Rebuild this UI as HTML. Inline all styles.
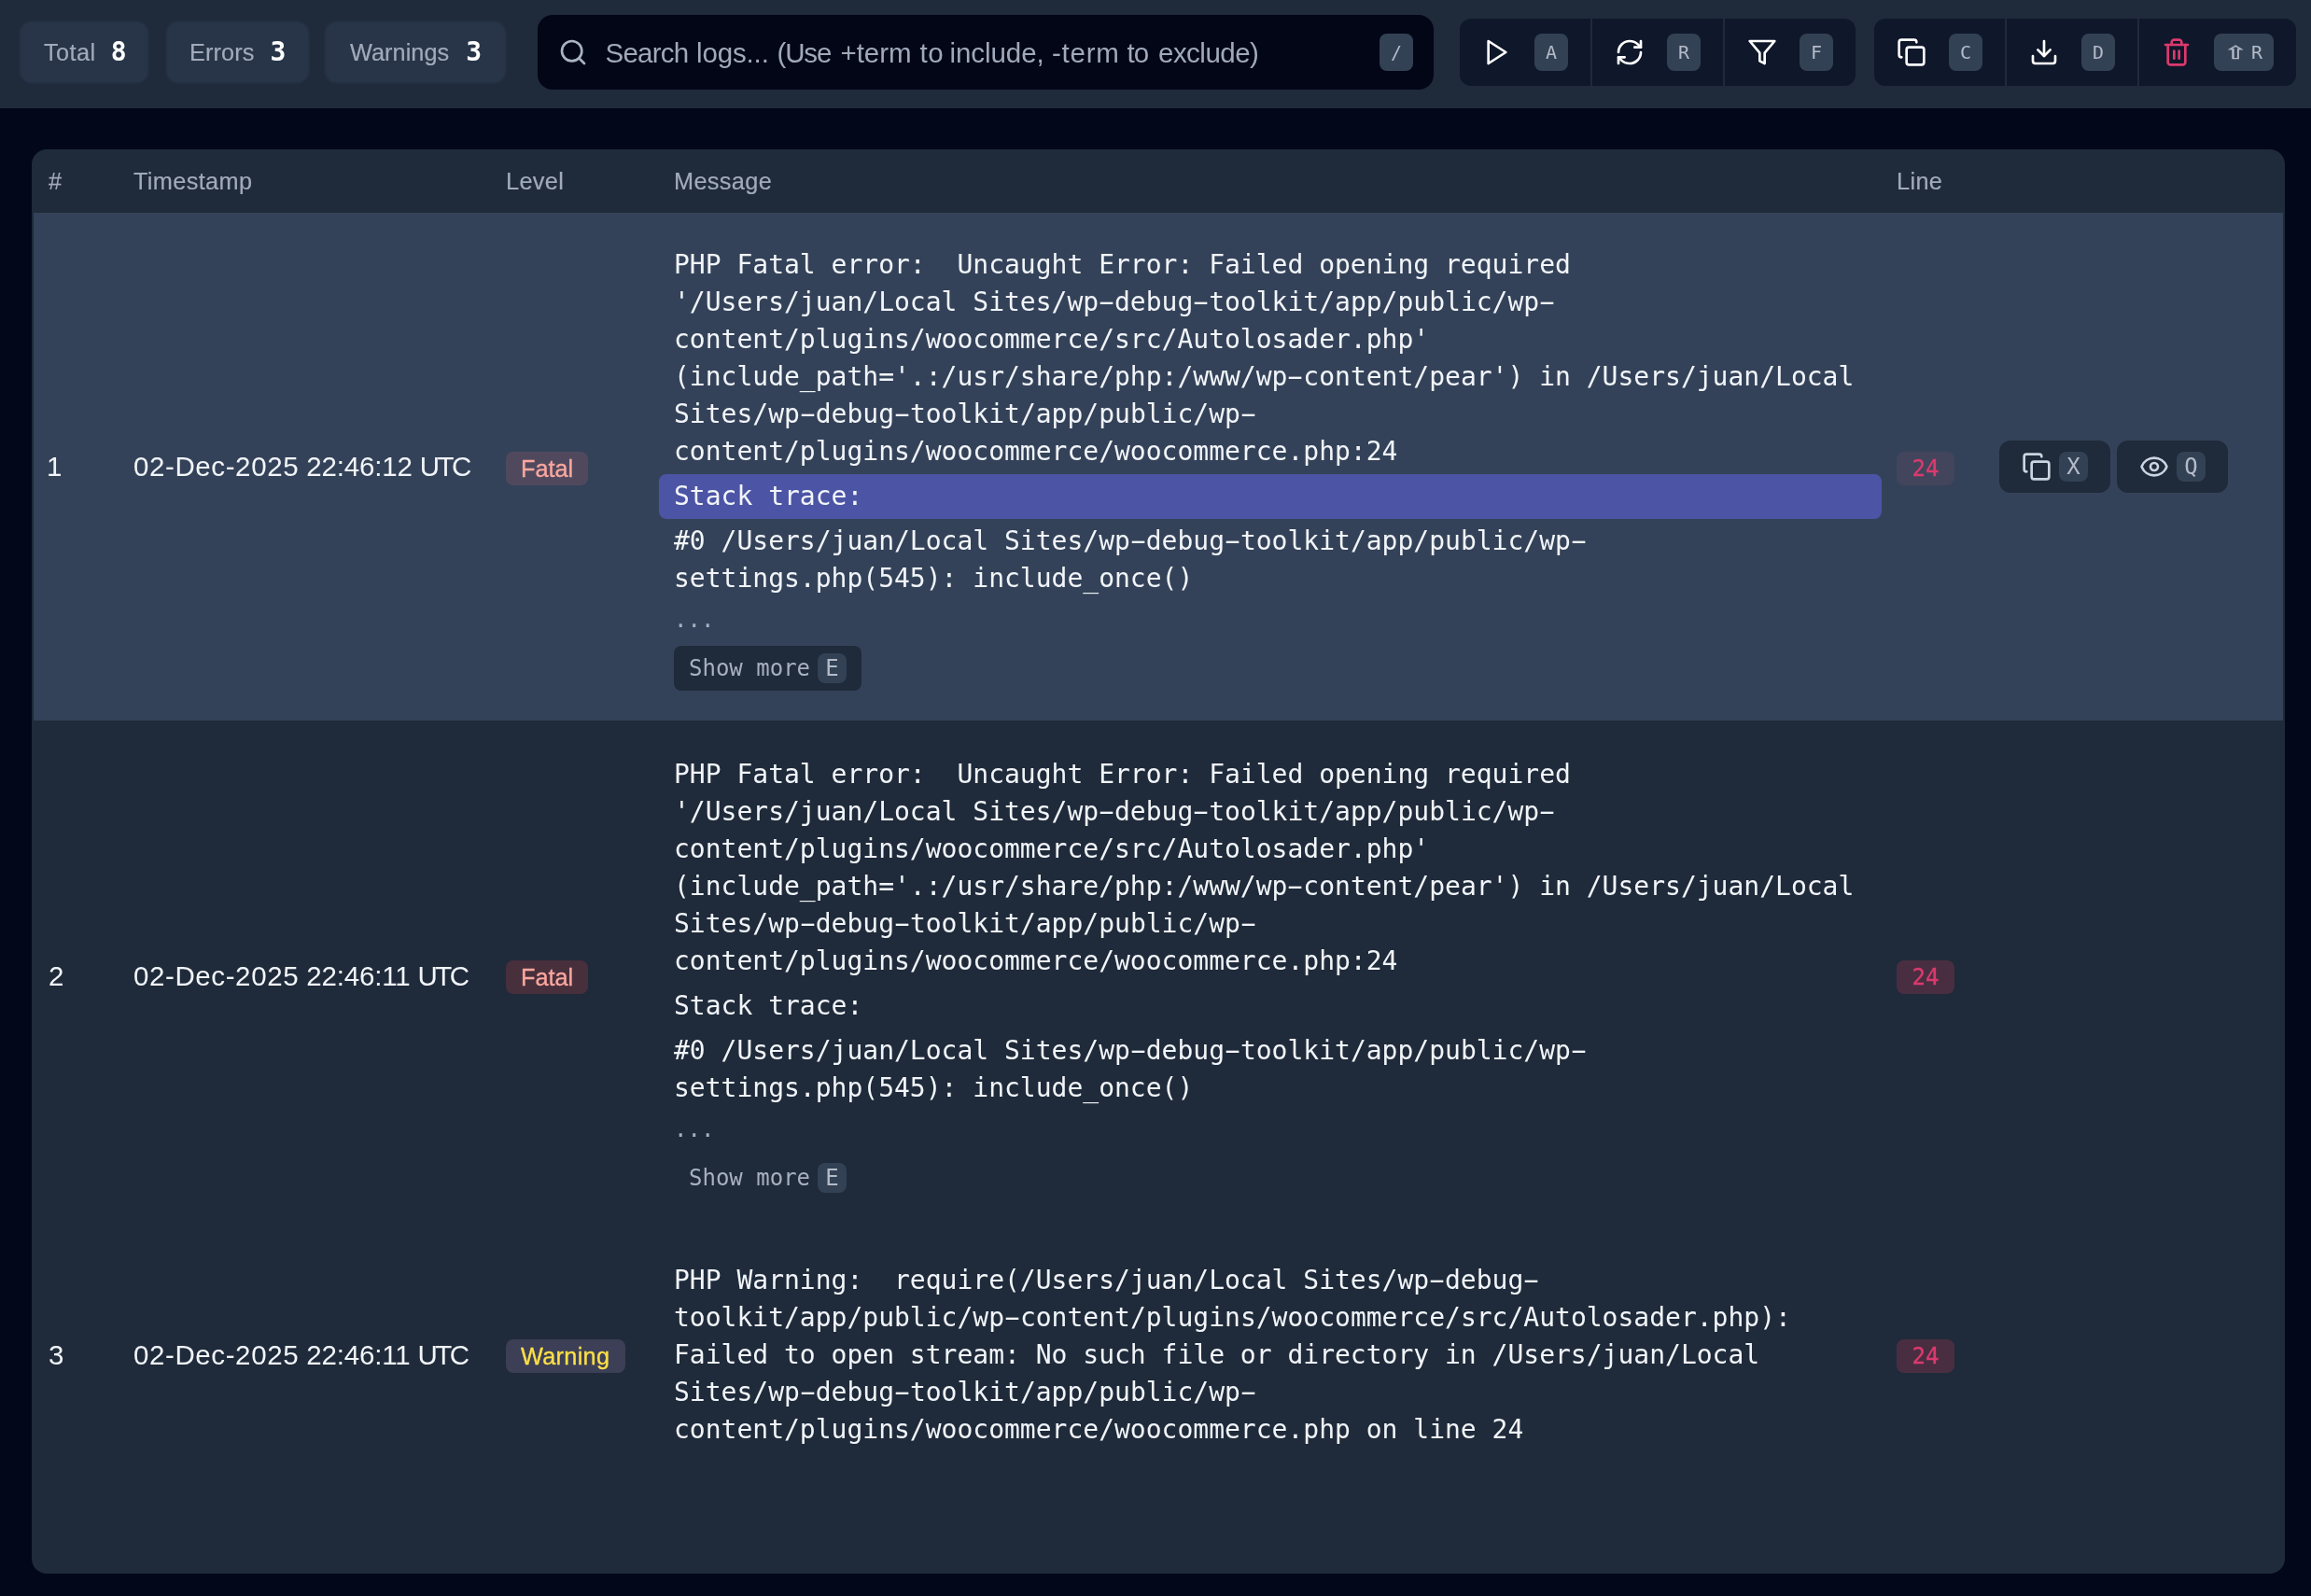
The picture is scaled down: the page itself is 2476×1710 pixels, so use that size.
<!DOCTYPE html>
<html lang="en">
<head>
<meta charset="utf-8">
<title>Log Viewer</title>
<style>
*{box-sizing:border-box;margin:0;padding:0}
html,body{width:2476px;height:1710px;overflow:hidden;background:#020819}
body{font-family:"Liberation Sans",sans-serif;color:#f1f5f9;position:relative}
.mono{font-family:"DejaVu Sans Mono","Liberation Mono",monospace}
svg.ic{width:32px;height:32px;fill:none;stroke:currentColor;stroke-width:2;stroke-linecap:round;stroke-linejoin:round;display:block;flex:none}

/* toolbar */
#bar,#card{will-change:transform}
#bar{position:absolute;left:0;top:0;width:2476px;height:116px;background:#1f2a3a}
.pill{position:absolute;top:22px;height:68px;border:2px solid #233043;background:#283548;border-radius:14px;display:flex;align-items:center;padding:0 0 0 25px}
.pill .l{font-size:25.3px;color:#a2aaba;line-height:32px;letter-spacing:.3px;-webkit-text-stroke:.2px #a2aaba}
.pill .n{font-family:"DejaVu Sans Mono",monospace;font-weight:bold;font-size:28px;color:#fff;margin-left:16px;line-height:32px}
#search{position:absolute;left:576px;top:16px;width:960px;height:80px;background:#020617;border-radius:16px}
#search svg{position:absolute;left:22px;top:24px;color:#aab3c4}
#search .ph{position:absolute;left:72.5px;top:21px;font-size:29.5px;line-height:40px;color:#a0a9ba;white-space:nowrap}
kbd{font-family:"DejaVu Sans Mono",monospace;font-style:normal;background:#334155;color:#b4bbc8;border-radius:8px;display:block;text-align:center;flex:none;white-space:nowrap}
kbd.t{height:40px;width:36px;font-size:20px;line-height:40px}
#search kbd{position:absolute;left:902px;top:20px}
.grp{position:absolute;top:20px;height:72px;background:#0f172a;border-radius:12px;display:flex;overflow:hidden}
.grp .b{height:72px;padding:0 24px;display:flex;align-items:center;color:#fff}
.grp .b kbd{margin-left:24px}
.sh{display:inline-block;width:20px;margin-right:8px;text-align:center;font-family:"DejaVu Sans",sans-serif;font-size:19px;line-height:20px;vertical-align:baseline;-webkit-text-stroke:.3px #b4bbc8;transform:translate(1px,0) scaleX(1.7)}
.grp .d{width:2px;height:72px;background:#1f2a3a}

/* table card */
#card{position:absolute;left:34px;top:160px;width:2414px;height:1526px;background:#1f2a3a;border-radius:16px;overflow:hidden}
.th{position:absolute;top:18px;font-size:25.3px;letter-spacing:.35px;-webkit-text-stroke:.2px #a2aaba;line-height:32px;color:#a2aaba;white-space:nowrap}
.row{position:absolute;left:2px;width:2410px}
.row.sel{background:#344259}
.c{position:absolute;white-space:nowrap}
.num,.ts{font-size:29.5px;line-height:40px;color:#f1f5f9}
.badge{position:absolute;height:36px;border-radius:8px;font-size:25.3px;line-height:36px;padding:0 16px;white-space:nowrap}
.fatal{background:rgba(239,68,68,.2);color:#fba79f;-webkit-text-stroke:.3px #fba79f}
.warn{background:#3c3f56;color:#fde047;-webkit-text-stroke:.3px #fde047;letter-spacing:.3px;padding-right:17px}
.ln{background:rgba(244,63,94,.2);color:#db3a6e;font-family:"DejaVu Sans Mono",monospace;font-size:24px;padding:0 16.5px;-webkit-text-stroke:.35px #db3a6e}
.msg{position:absolute;left:686px;width:1278px;font-family:"DejaVu Sans Mono",monospace;font-size:28px;line-height:40px;color:#f1f5f9;white-space:pre-wrap}
.sel .fatal{background:#50495e}
.sel .ln{background:#42455b}
.hy{display:inline-block;transform:scaleX(1.9) translateY(-.5px)}
.seg{padding:4px 16px;margin:0 -16px;border-radius:8px}
.seg.hl{background:rgba(99,102,241,.5)}
.seg.dim{color:#a8b0c0;font-size:24px;line-height:32px;margin-bottom:8px}
.more{display:inline-flex;align-items:center;height:48px;padding:0 16px;border-radius:8px;font-size:24px;line-height:32px;color:#a8b0c0;white-space:nowrap;vertical-align:top}
.more.on{background:#1f2a3a}
.more kbd{margin-left:8px;height:32px;width:31px;font-size:24px;line-height:32px;border-radius:8px}
.act{position:absolute;height:56px;background:#1f2a3a;border-radius:12px;display:flex;align-items:center;padding:0 24px;color:#cbd5e1}
.act kbd{margin-left:8px;height:32px;width:31px;font-size:24px;line-height:32px}
</style>
</head>
<body>
<div id="bar">
  <div class="pill" style="left:20px;width:140px"><span class="l" style="letter-spacing:.45px">Total</span><span class="n">8</span></div>
  <div class="pill" style="left:177px;width:155px"><span class="l" style="letter-spacing:.1px;margin-left:-1px">Errors</span><span class="n" style="margin-left:17px">3</span></div>
  <div class="pill" style="left:347px;width:196px"><span class="l" style="letter-spacing:.05px;margin-left:1px">Warnings</span><span class="n" style="margin-left:18px">3</span></div>
  <div id="search">
    <svg class="ic" viewBox="0 0 24 24"><circle cx="11" cy="11" r="8"/><path d="m21 21-4.3-4.3"/></svg>
    <span class="ph"><span style="margin-left:0.0px;letter-spacing:-0.76px">Search</span> <span style="margin-left:0.38px;letter-spacing:-0.14px">logs...</span> <span style="margin-left:0.56px;letter-spacing:-1.12px">(Use</span> <span style="margin-left:2.0px;letter-spacing:-0.05px">+term</span> <span style="margin-left:0.81px;letter-spacing:0.6px">to</span> <span style="margin-left:-2.0px;letter-spacing:-0.06px">include,</span> <span style="margin-left:0.09px;letter-spacing:0.75px">-term</span> <span style="margin-left:-0.27px;letter-spacing:-1.0px">to</span> <span style="margin-left:2.69px;letter-spacing:-0.52px">exclude)</span></span>
    <kbd class="t">/</kbd>
  </div>
  <div class="grp" style="left:1564px;width:424px">
    <div class="b"><svg class="ic" viewBox="0 0 24 24"><polygon points="5 3 19 12 5 21 5 3"/></svg><kbd class="t">A</kbd></div>
    <div class="d"></div>
    <div class="b"><svg class="ic" viewBox="0 0 24 24"><path d="M3 12a9 9 0 0 1 9-9 9.75 9.75 0 0 1 6.74 2.74L21 8"/><path d="M21 3v5h-5"/><path d="M21 12a9 9 0 0 1-9 9 9.75 9.75 0 0 1-6.74-2.74L3 16"/><path d="M8 16H3v5"/></svg><kbd class="t">R</kbd></div>
    <div class="d"></div>
    <div class="b"><svg class="ic" viewBox="0 0 24 24"><polygon points="22 3 2 3 10 12.46 10 19 14 21 14 12.46 22 3"/></svg><kbd class="t">F</kbd></div>
  </div>
  <div class="grp" style="left:2008px;width:452px">
    <div class="b"><svg class="ic" viewBox="0 0 24 24"><rect width="14" height="14" x="8" y="8" rx="2" ry="2"/><path d="M4 16c-1.1 0-2-.9-2-2V4c0-1.1.9-2 2-2h10c1.1 0 2 .9 2 2"/></svg><kbd class="t">C</kbd></div>
    <div class="d"></div>
    <div class="b"><svg class="ic" viewBox="0 0 24 24"><path d="M21 15v4a2 2 0 0 1-2 2H5a2 2 0 0 1-2-2v-4"/><polyline points="7 10 12 15 17 10"/><line x1="12" x2="12" y1="15" y2="3"/></svg><kbd class="t">D</kbd></div>
    <div class="d"></div>
    <div class="b" style="color:#db3a6e"><svg class="ic" viewBox="0 0 24 24"><path d="M3 6h18"/><path d="M19 6v14c0 1-1 2-2 2H7c-1 0-2-1-2-2V6"/><path d="M8 6V4c0-1 1-2 2-2h4c1 0 2 1 2 2v2"/><line x1="10" x2="10" y1="11" y2="17"/><line x1="14" x2="14" y1="11" y2="17"/></svg><kbd class="t" style="width:64px"><span class="sh">⇧</span>R</kbd></div>
  </div>
</div>

<div id="card">
  <div class="th" style="left:18px">#</div>
  <div class="th" style="left:109px">Timestamp</div>
  <div class="th" style="left:508px">Level</div>
  <div class="th" style="left:688px">Message</div>
  <div class="th" style="left:1998px">Line</div>

  <div class="row sel" style="top:68px;height:544px">
    <div class="c num" style="left:14px;top:252px">1</div>
    <div class="c ts" style="left:107px;top:252px"><span style="letter-spacing:.6px">02-Dec-2025</span> <span style="letter-spacing:-.2px">22:46:12</span> <span style="letter-spacing:-2.6px">UTC</span></div>
    <div class="badge fatal" style="left:506px;top:256px">Fatal</div>
    <div class="msg" style="top:32px"><div class="seg">PHP Fatal error:  Uncaught Error: Failed opening required '/Users/juan/Local Sites/wp<span class="hy">-</span>debug<span class="hy">-</span>toolkit/app/public/wp<span class="hy">-</span>content/plugins/woocommerce/src/Autolosader.php' (include_path='.:/usr/share/php:/www/wp<span class="hy">-</span>content/pear') in /Users/juan/Local Sites/wp<span class="hy">-</span>debug<span class="hy">-</span>toolkit/app/public/wp<span class="hy">-</span>content/plugins/woocommerce/woocommerce.php:24</div><div class="seg hl">Stack trace:</div><div class="seg">#0 /Users/juan/Local Sites/wp<span class="hy">-</span>debug<span class="hy">-</span>toolkit/app/public/wp<span class="hy">-</span>settings.php(545): include_once()</div><div class="seg dim">...</div><div class="more on">Show more<kbd>E</kbd></div></div>
    <div class="badge ln" style="left:1996px;top:256px">24</div>
    <div class="act" style="left:2106px;top:244px"><svg class="ic" viewBox="0 0 24 24"><rect width="14" height="14" x="8" y="8" rx="2" ry="2"/><path d="M4 16c-1.1 0-2-.9-2-2V4c0-1.1.9-2 2-2h10c1.1 0 2 .9 2 2"/></svg><kbd>X</kbd></div>
    <div class="act" style="left:2232px;top:244px"><svg class="ic" viewBox="0 0 24 24"><path d="M2.062 12.348a1 1 0 0 1 0-.696 10.75 10.75 0 0 1 19.876 0 1 1 0 0 1 0 .696 10.75 10.75 0 0 1-19.876 0"/><circle cx="12" cy="12" r="3"/></svg><kbd>Q</kbd></div>
  </div>

  <div class="row" style="top:614px;height:544px">
    <div class="c num" style="left:16px;top:252px">2</div>
    <div class="c ts" style="left:107px;top:252px"><span style="letter-spacing:.6px">02-Dec-2025</span> <span style="letter-spacing:-.2px">22:46:11</span> <span style="letter-spacing:-2.6px">UTC</span></div>
    <div class="badge fatal" style="left:506px;top:255px">Fatal</div>
    <div class="msg" style="top:32px"><div class="seg">PHP Fatal error:  Uncaught Error: Failed opening required '/Users/juan/Local Sites/wp<span class="hy">-</span>debug<span class="hy">-</span>toolkit/app/public/wp<span class="hy">-</span>content/plugins/woocommerce/src/Autolosader.php' (include_path='.:/usr/share/php:/www/wp<span class="hy">-</span>content/pear') in /Users/juan/Local Sites/wp<span class="hy">-</span>debug<span class="hy">-</span>toolkit/app/public/wp<span class="hy">-</span>content/plugins/woocommerce/woocommerce.php:24</div><div class="seg">Stack trace:</div><div class="seg">#0 /Users/juan/Local Sites/wp<span class="hy">-</span>debug<span class="hy">-</span>toolkit/app/public/wp<span class="hy">-</span>settings.php(545): include_once()</div><div class="seg dim">...</div><div class="more">Show more<kbd>E</kbd></div></div>
    <div class="badge ln" style="left:1996px;top:255px">24</div>
  </div>

  <div class="row" style="top:1156px;height:272px">
    <div class="c num" style="left:16px;top:116px">3</div>
    <div class="c ts" style="left:107px;top:116px"><span style="letter-spacing:.6px">02-Dec-2025</span> <span style="letter-spacing:-.2px">22:46:11</span> <span style="letter-spacing:-2.6px">UTC</span></div>
    <div class="badge warn" style="left:506px;top:119px">Warning</div>
    <div class="msg" style="top:32px"><div class="seg">PHP Warning:  require(/Users/juan/Local Sites/wp<span class="hy">-</span>debug<span class="hy">-</span>toolkit/app/public/wp<span class="hy">-</span>content/plugins/woocommerce/src/Autolosader.php): Failed to open stream: No such file or directory in /Users/juan/Local Sites/wp<span class="hy">-</span>debug<span class="hy">-</span>toolkit/app/public/wp<span class="hy">-</span>content/plugins/woocommerce/woocommerce.php on line 24</div></div>
    <div class="badge ln" style="left:1996px;top:119px">24</div>
  </div>
</div>
</body>
</html>
